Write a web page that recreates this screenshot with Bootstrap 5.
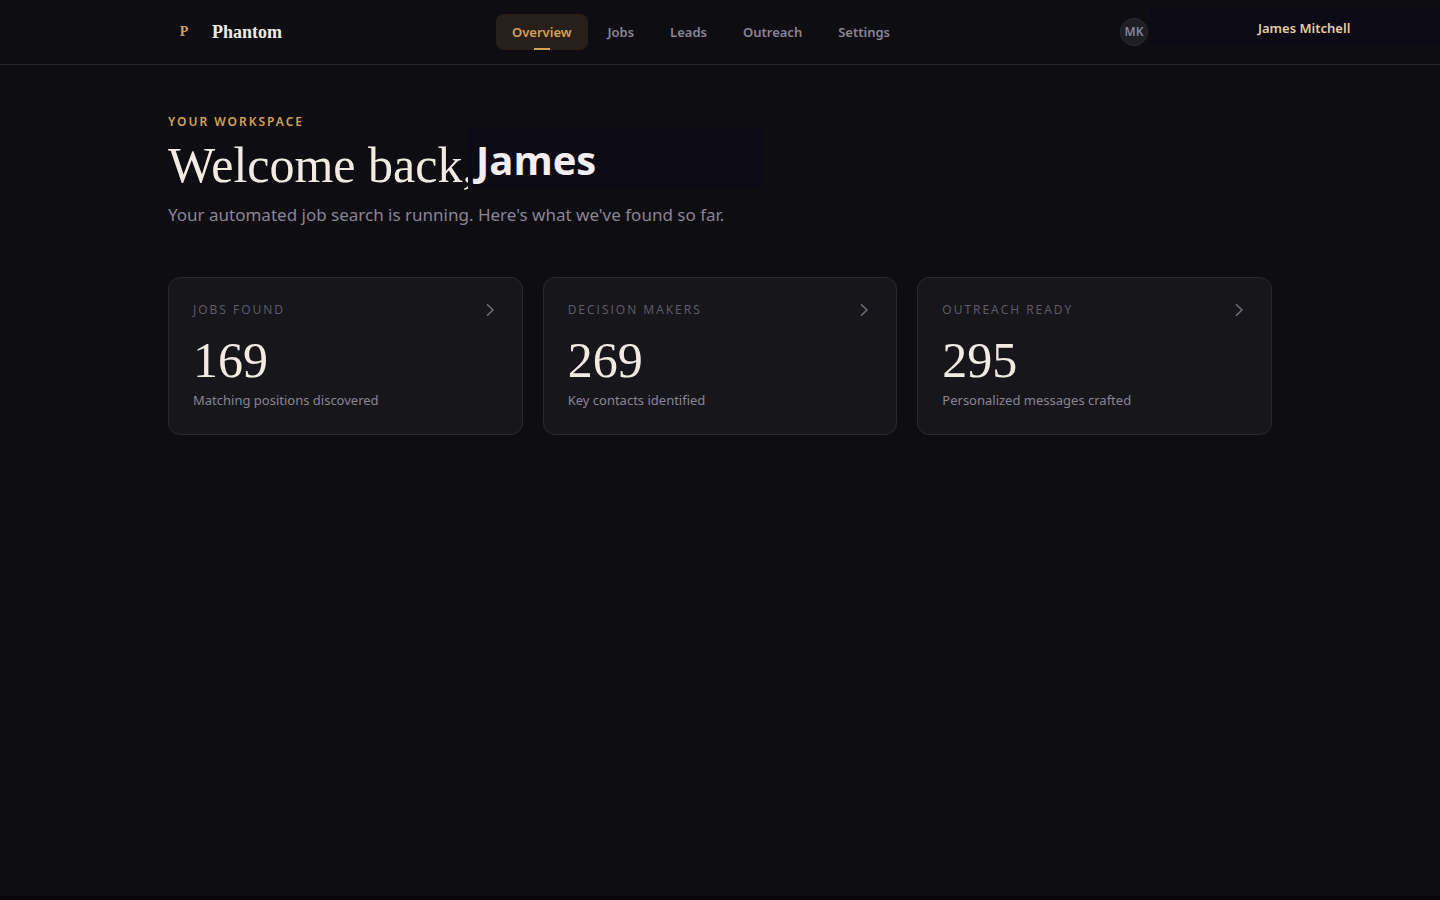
<!DOCTYPE html>
<html lang="en">
<head>
<meta charset="utf-8">
<meta name="viewport" content="width=device-width, initial-scale=1">
<title>Phantom – Overview</title>
<link href="https://cdn.jsdelivr.net/npm/bootstrap@5.3.0/dist/css/bootstrap.min.css" rel="stylesheet">
<style>
  :root {
    --ink: #0e0e12;
    --panel: #17171b;
    --line: #24242d;
    --cream: #f0ebe3;
    --muted: #8a8494;
    --dim: #625d6c;
    --gold: #d4a056;
    --patch: #0c0a14;
    --serif: "Liberation Serif", serif;
  }
  body { background: var(--ink); color: var(--cream); font-family: "Noto Sans", sans-serif; font-size: 14px; line-height: 20px; border-bottom: 4px solid #08060b; }
  .shell { max-width: 1200px; padding-left: 48px; padding-right: 48px; }
  .topbar { height: 65px; border-bottom: 1px solid var(--line); overflow: hidden; }
  .topbar .navbar-brand { gap: 12px; color: var(--cream); font: 700 18px/24px var(--serif); width: 328px; }
  .brand-mark { width: 32px; color: var(--gold); font-size: 14px; }
  .topbar .nav-link { position: relative; height: 36px; padding: 8px 16px; border-radius: 8px; color: var(--muted); font-size: 13px; font-weight: 600; line-height: 20px; }
  .topbar .nav-link.active { background: #271f1a; color: var(--gold); }
  .topbar .nav-link.active::after { content: ""; position: absolute; left: 50%; bottom: 0; width: 16px; height: 2px; margin-left: -8px; background: var(--gold); }
  .account { width: 152px; }
  .avatar { width: 28px; height: 28px; background: #1e1e24; border: 1px solid #2a2a33; color: var(--muted); font-size: 12px; font-weight: 600; }
  .account-name { left: 30px; top: -10px; width: 400px; height: 38px; padding: 10px 0 0 108px; background: var(--patch); color: #e0cfa4; font-size: 13px; font-weight: 600; line-height: 20px; }
  main { padding-top: 48px; }
  .eyebrow { color: var(--gold); font-size: 12px; line-height: 18px; font-weight: 600; letter-spacing: 2px; }
  .headline { height: 60px; margin: 2px 0 8px; font: 400 50px/64px var(--serif); }
  .first-name { left: 300px; top: -5px; width: 295px; height: 60px; padding-left: 8px; background: var(--patch); color: #f3eef2; font: 700 40px/64px "Open Sans", sans-serif; }
  .lede { color: var(--muted); font-size: 17px; line-height: 28px; margin-bottom: 48px; }
  .stat { --bs-gutter-x: 20px; }
  .stat-card { min-height: 158px; padding: 20px 24px; background: var(--panel); border: 1px solid #282830; border-radius: 12px; color: var(--muted); }
  .stat-label { color: var(--dim); font-family: "Open Sans", sans-serif; font-size: 12px; line-height: 24px; font-weight: 500; letter-spacing: 2px; }
  .stat-value { color: var(--cream); font: 400 50px/52px var(--serif); margin: 12px 0 4px; }
  .stat-note { font-size: 13px; line-height: 20px; }
</style>
</head>
<body class="min-vh-100">
<header class="topbar">
  <div class="container-fluid shell h-100 d-flex align-items-center">
    <a class="navbar-brand d-flex align-items-center m-0 p-0" href="#"><span class="brand-mark text-center">P</span><span>Phantom</span></a>
    <nav class="nav gap-1 flex-nowrap" aria-label="Main">
      <a class="nav-link active" aria-current="page" href="#">Overview</a>
      <a class="nav-link" href="#">Jobs</a>
      <a class="nav-link" href="#">Leads</a>
      <a class="nav-link" href="#">Outreach</a>
      <a class="nav-link" href="#">Settings</a>
    </nav>
    <div class="account position-relative ms-auto">
      <div class="avatar rounded-circle d-flex align-items-center justify-content-center">MK</div>
      <div class="account-name position-absolute">James Mitchell</div>
    </div>
  </div>
</header>
<main class="container-fluid shell">
  <div class="eyebrow">YOUR WORKSPACE</div>
  <h1 class="headline position-relative text-nowrap">Welcome back, <span class="first-name position-absolute">James</span></h1>
  <p class="lede">Your automated job search is running. Here's what we've found so far.</p>
  <div class="row stat">
    <div class="col-4"><a href="#" class="stat-card d-block text-decoration-none">
      <div class="d-flex justify-content-between align-items-center"><span class="stat-label">JOBS FOUND</span>
        <svg width="16" height="16" viewBox="0 0 16 16" fill="none" stroke="#75707f" stroke-width="1.5" stroke-linecap="round" stroke-linejoin="round" aria-hidden="true"><path d="M5.5 2.8L11 8l-5.5 5.2"/></svg></div>
      <div class="stat-value">169</div><div class="stat-note">Matching positions discovered</div></a></div>
    <div class="col-4"><a href="#" class="stat-card d-block text-decoration-none">
      <div class="d-flex justify-content-between align-items-center"><span class="stat-label">DECISION MAKERS</span>
        <svg width="16" height="16" viewBox="0 0 16 16" fill="none" stroke="#75707f" stroke-width="1.5" stroke-linecap="round" stroke-linejoin="round" aria-hidden="true"><path d="M5.5 2.8L11 8l-5.5 5.2"/></svg></div>
      <div class="stat-value">269</div><div class="stat-note">Key contacts identified</div></a></div>
    <div class="col-4"><a href="#" class="stat-card d-block text-decoration-none">
      <div class="d-flex justify-content-between align-items-center"><span class="stat-label">OUTREACH READY</span>
        <svg width="16" height="16" viewBox="0 0 16 16" fill="none" stroke="#75707f" stroke-width="1.5" stroke-linecap="round" stroke-linejoin="round" aria-hidden="true"><path d="M5.5 2.8L11 8l-5.5 5.2"/></svg></div>
      <div class="stat-value">295</div><div class="stat-note">Personalized messages crafted</div></a></div>
  </div>
</main>
<script src="https://cdn.jsdelivr.net/npm/bootstrap@5.3.0/dist/js/bootstrap.bundle.min.js"></script>
</body>
</html>
